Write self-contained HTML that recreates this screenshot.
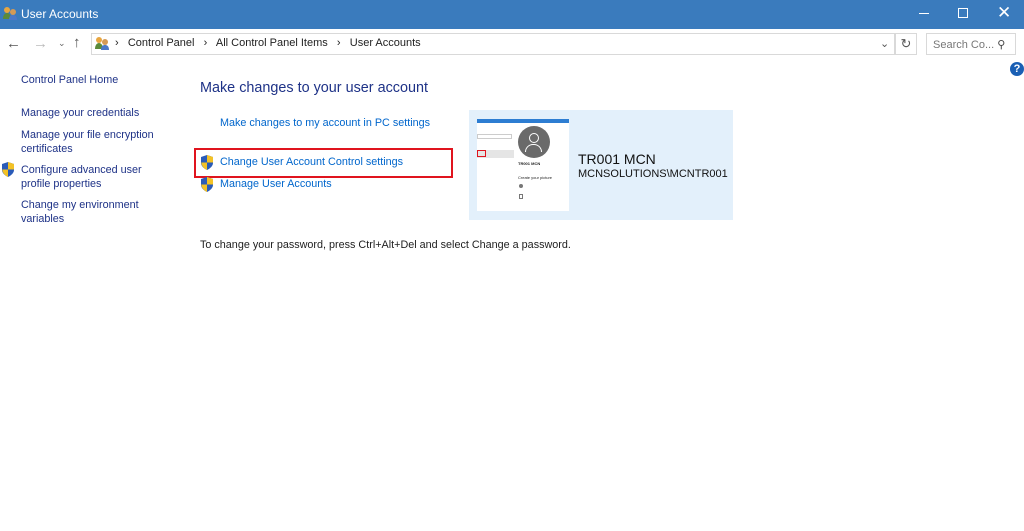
<!DOCTYPE html>
<html><head><meta charset="utf-8"><style>
*{margin:0;padding:0;box-sizing:border-box}
body{width:1024px;height:531px;background:#fff;font-family:"Liberation Sans",sans-serif;font-size:10.8px;color:#1e1e1e;position:relative;overflow:hidden}
.a{position:absolute;white-space:nowrap}
.l{color:#1e3287}
.b{color:#0066cc}
.sh{position:absolute;width:14px;height:15px}
</style></head><body>
<div class="a" style="left:0;top:0;width:1024px;height:29px;background:#3a7bbd"></div>
<div class="a" style="left:3px;top:6px;width:14px;height:14px"><svg width="14" height="14"><circle cx="4" cy="4" r="3" fill="#e8a640"/><path d="M0 13c0-4 2-6 4-6s4 2 4 6z" fill="#5b8a3a"/><circle cx="10" cy="6" r="3" fill="#d49a55"/><path d="M6 14c0-4 2-5 4-5s4 1 4 5z" fill="#4a78c8"/></svg></div>
<div class="a" style="left:21px;top:7px;color:#fff;font-size:12px">User Accounts</div>
<div class="a" style="left:919px;top:13px;width:10px;height:1px;background:#fff"></div>
<div class="a" style="left:958px;top:8px;width:10px;height:10px;border:1px solid #fff"></div>
<div class="a" style="left:997px;top:3px;color:#fff;font-size:17px">✕</div>
<div class="a" style="left:6px;top:35px;color:#555;font-size:15px">←</div>
<div class="a" style="left:33px;top:35px;color:#bbb;font-size:15px">→</div>
<div class="a" style="left:58px;top:38px;color:#666;font-size:9px">⌄</div>
<div class="a" style="left:73px;top:34px;color:#555;font-size:15px">↑</div>
<div class="a" style="left:91px;top:33px;width:804px;height:22px;border:1px solid #d9d9d9"></div>
<div class="a" style="left:895px;top:33px;width:22px;height:22px;border:1px solid #d9d9d9;color:#555;text-align:center;line-height:20px;font-size:13px">↻</div>
<div class="a" style="left:95px;top:36px;width:14px;height:14px"><svg width="14" height="14"><circle cx="4" cy="4" r="3" fill="#e8a640"/><path d="M0 13c0-4 2-6 4-6s4 2 4 6z" fill="#5b8a3a"/><circle cx="10" cy="6" r="3" fill="#d49a55"/><path d="M6 14c0-4 2-5 4-5s4 1 4 5z" fill="#4a78c8"/></svg></div>
<div class="a" style="left:115px;top:37px;font-size:11px">›&nbsp;&nbsp; Control Panel &nbsp;&nbsp;›&nbsp;&nbsp; All Control Panel Items &nbsp;&nbsp;›&nbsp;&nbsp; User Accounts</div>
<div class="a" style="left:880px;top:37px;color:#555;font-size:11px">⌄</div>
<div class="a" style="left:926px;top:33px;width:90px;height:22px;border:1px solid #d9d9d9;color:#777;padding:4px 0 0 6px;font-size:11px">Search Co... <span style="color:#444">⚲</span></div>
<div class="a" style="left:1010px;top:62px;width:14px;height:14px;border-radius:50%;background:#1a5fb4;color:#fff;font-weight:bold;font-size:11px;text-align:center;line-height:14px">?</div>
<div class="a l" style="left:21px;top:74px">Control Panel Home</div>
<div class="a l" style="left:21px;top:107px">Manage your credentials</div>
<div class="a l" style="left:21px;top:128px;line-height:14px">Manage your file encryption<br>certificates</div>
<div class="a l" style="left:21px;top:163px;line-height:14px">Configure advanced user<br>profile properties</div>
<div class="a l" style="left:21px;top:198px;line-height:14px">Change my environment<br>variables</div>
<svg class="sh" style="left:1px;top:162px" viewBox="0 0 14 15"><path d="M7 0L13 2V8C13 11 10 13.5 7 15C4 13.5 1 11 1 8V2Z" fill="#2a5bb8"/><path d="M7 0L13 2V7.5H7ZM7 7.5H1.2C1.6 11 4 13.5 7 15Z" fill="#f3c226"/></svg>
<div class="a" style="left:200px;top:80px;font-size:14.4px;color:#1e3287">Make changes to your user account</div>
<div class="a b" style="left:220px;top:117px">Make changes to my account in PC settings</div>
<div class="a" style="left:194px;top:148px;width:259px;height:30px;border:2px solid #e0141e"></div>
<svg class="sh" style="left:200px;top:155px" viewBox="0 0 14 15"><path d="M7 0L13 2V8C13 11 10 13.5 7 15C4 13.5 1 11 1 8V2Z" fill="#2a5bb8"/><path d="M7 0L13 2V7.5H7ZM7 7.5H1.2C1.6 11 4 13.5 7 15Z" fill="#f3c226"/></svg>
<div class="a b" style="left:220px;top:156px">Change User Account Control settings</div>
<svg class="sh" style="left:200px;top:177px" viewBox="0 0 14 15"><path d="M7 0L13 2V8C13 11 10 13.5 7 15C4 13.5 1 11 1 8V2Z" fill="#2a5bb8"/><path d="M7 0L13 2V7.5H7ZM7 7.5H1.2C1.6 11 4 13.5 7 15Z" fill="#f3c226"/></svg>
<div class="a b" style="left:220px;top:178px">Manage User Accounts</div>
<div class="a" style="left:469px;top:110px;width:264px;height:110px;background:#e3f0fb"></div>
<div class="a" style="left:477px;top:119px;width:92px;height:92px;background:#fff;overflow:hidden">
 <div style="position:absolute;left:0;top:0;width:92px;height:4px;background:#2d7dd2"></div>
 <div style="position:absolute;left:0;top:15px;width:35px;height:5px;border:1px solid #ccc"></div>
 <div style="position:absolute;left:0;top:31px;width:37px;height:8px;background:#e5e5e5"></div>
 <div style="position:absolute;left:0;top:31px;width:9px;height:7px;border:1px solid #e0141e"></div>
 <div style="position:absolute;left:41px;top:7px;width:32px;height:32px;border-radius:50%;background:#6a6a6a"></div>
 <div style="position:absolute;left:52px;top:14px;width:10px;height:10px;border-radius:50%;border:1.5px solid #fff"></div>
 <div style="position:absolute;left:48px;top:25px;width:17px;height:8px;border-radius:8px 8px 0 0;border:1.5px solid #fff;border-bottom:none"></div>
 <div style="position:absolute;left:41px;top:42px;font-size:4px;font-weight:bold">TR001 MCN</div>
 <div style="position:absolute;left:41px;top:56px;font-size:4px">Create your picture</div>
 <div style="position:absolute;left:42px;top:65px;width:4px;height:4px;border-radius:50%;background:#777"></div>
 <div style="position:absolute;left:42px;top:75px;width:4px;height:5px;border:1px solid #777"></div>
</div>
<div class="a" style="left:578px;top:151px;font-size:14px;color:#111">TR001 MCN</div>
<div class="a" style="left:578px;top:168px;font-size:11px;color:#111">MCNSOLUTIONS\MCNTR001</div>
<div class="a" style="left:200px;top:239px;color:#1e1e1e">To change your password, press Ctrl+Alt+Del and select Change a password.</div>
</body></html>
